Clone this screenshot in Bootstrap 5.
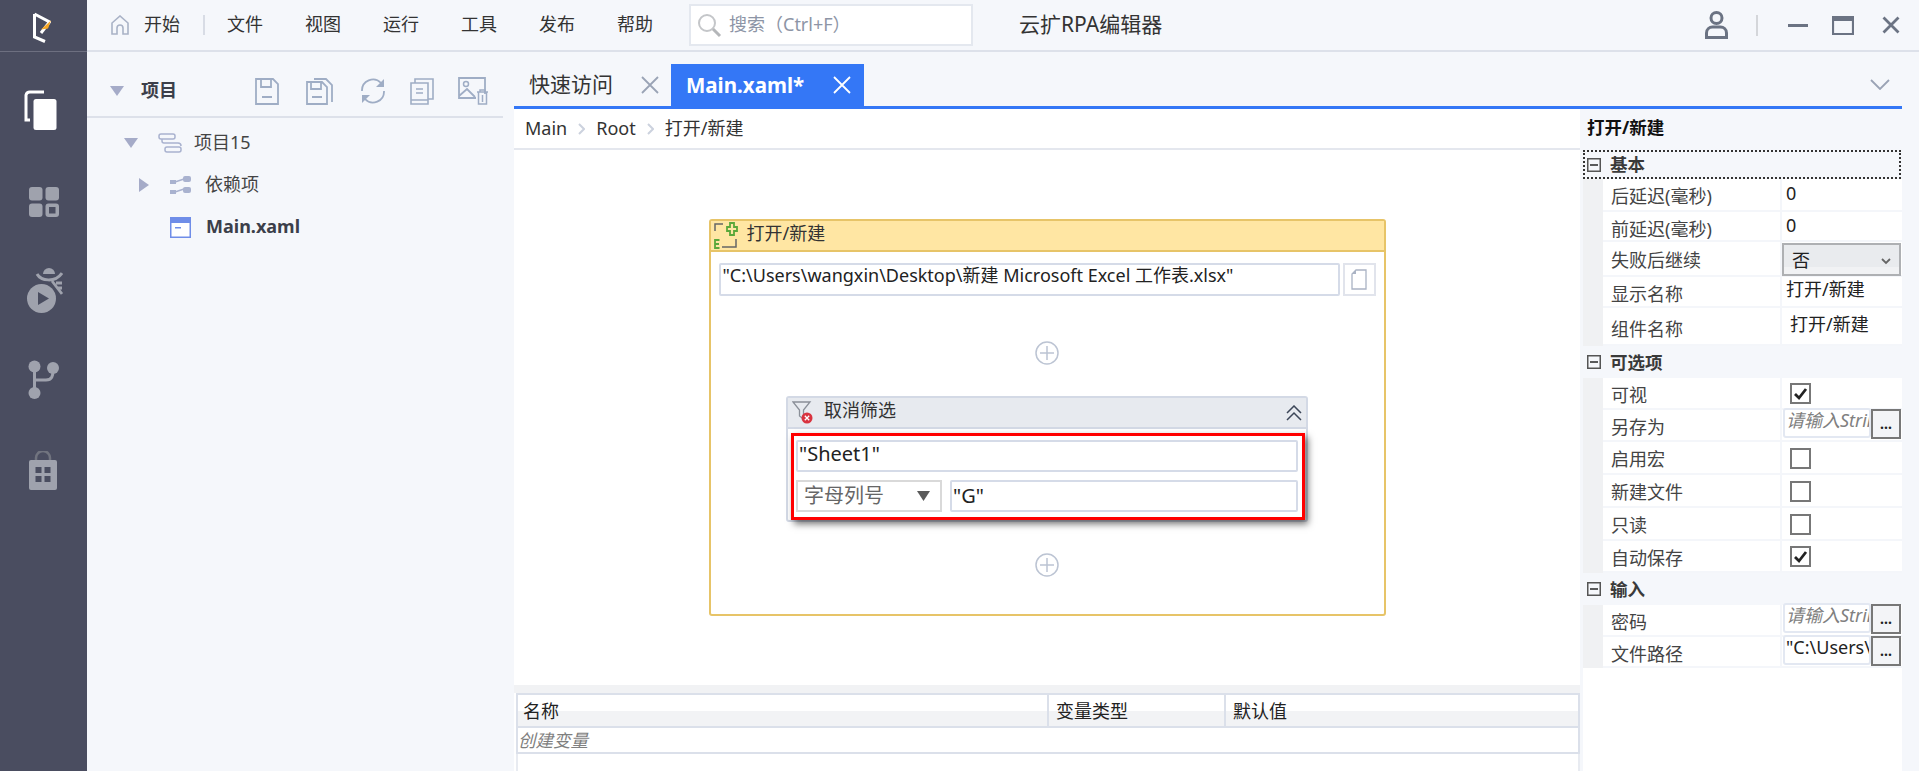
<!DOCTYPE html>
<html lang="zh"><head><meta charset="utf-8"><title>云扩RPA编辑器</title>
<link href="https://cdn.jsdelivr.net/npm/bootstrap@5.3.0/dist/css/bootstrap.min.css" rel="stylesheet">
<style>
html,body{height:771px;overflow:hidden}
body{background:#f5f7fb;font-family:"Noto Sans","Noto Sans CJK SC",sans-serif;font-size:18px;line-height:1.2;color:#333}
svg{display:block;flex:none}
.rail{width:87px;flex:none;background:#4a4d60;height:771px}
.rail-logo{height:52px;width:100%;border-bottom:1px solid #6d6f80;padding:12px 0 0 33px}
.ri1{margin:38px 0 0 -6px}.ri2{margin-top:57px}.ri3{margin:50px 0 0 3px}.ri4{margin:47px 0 0 0}.ri5{margin:52px 0 0 -1px}
.right-col{min-width:0}
.topbar{height:52px;flex:none;border-bottom:2px solid #dde1ea;padding-left:24px}
.home{margin-right:15px}
.menu-sep{width:2px;height:20px;background:#d8dce5;margin:0 22px 0 23px}
.menu-item{width:36px;margin-right:42px;white-space:nowrap;color:#333}
.searchbox{width:284px;height:42px;margin-left:-6px;background:#fff;border:2px solid #e4e8ef;color:#8d95a6;padding-left:6px;gap:7px}
.app-title{margin-left:46px;font-size:21px;color:#333;white-space:nowrap}
.win-tools{margin-left:auto;padding-right:19px}
.wsep{width:2px;height:21px;background:#d4d6da;margin:0 30px 0 28px}
.proj{width:416px;flex:none}
.proj-head{height:66px;border-bottom:2px solid #dde1ea;padding:14px 0 0 23px}
.proj-title{font-weight:700;margin:0 0 0 17px;font-size:18px;color:#3c3f4a;width:114px}
.pi1{margin-right:27px}
.tree-row{height:42px;color:#444}
.t1{padding-left:37px;margin-top:4px}.t2{padding-left:52px}.t3{padding-left:83px}
.tree-i1{margin-left:20px}.tree-l1{margin-left:12px}
.tree-i2{margin-left:21px}.tree-l2{margin-left:14px}
.tree-label-b{font-weight:700;color:#3c3f4a;margin-left:15px}
.work{min-width:0;margin:0 17px 0 11px}
.tabs{height:54px;flex:none;padding:12px 0 0 0;position:relative}
.tab-a,.tab-b{height:42px;font-size:21px}
.tab-a{padding-left:15px;width:157px;color:#333}
.tab-b{width:193px;background:#3477f6;color:#fff;font-weight:700;padding-left:15px;font-size:20.5px}
.tab-x{margin-left:auto;margin-right:12px}
.tab-b .tab-x{margin-right:13px}
.tab-more{position:absolute;right:12px;top:27px}
.panel{border-top:3px solid #3477f6;min-height:0}
.doc{width:1066px;flex:none}
.crumb{height:41px;flex:none;background:#fff;border-bottom:2px solid #e4e7ee;padding:0 0 0 11px;color:#333}
.crumb-sep{margin:0 11px}
.canvas{background:#fff;height:535px;flex:none}
.flow-card{width:677px;height:397px;margin-top:69px;border:2px solid #e7c468;border-radius:3px;background:#fff}
.flow-head{height:31px;background:#ffe6a3;border-bottom:2px solid #e7c468;padding-left:3px;gap:9px}
.flow-head span,.sub-head span{padding-bottom:3px}
.flow-body{padding:11px 8px 0 8px}
.path-row{height:33px;gap:3px}
.path-in{height:33px;border:2px solid #d5dbe8;border-radius:2px;padding-left:2px;color:#222;white-space:nowrap;overflow:hidden}
.path-btn{width:33px;height:33px;border:2px solid #e1e4ec}
.plus-a{margin:45px auto 0}
.plus-b{margin:31px auto 0}
.sub-card{width:522px;height:126px;margin:31px auto 0;border:2px solid #d3d9e5;border-radius:3px;background:#fff}
.sub-head{height:31px;background:#e7eaef;border-bottom:2px solid #d3d9e5;padding:0 4px 0 4px;gap:10px}
.redbox{margin:4px 1px 0 3px;height:87px;border:3px solid #f00;padding:4px 4px 0 2px;box-shadow:3px 4px 7px rgba(0,0,0,.55);background:#fff}
.fld{height:32px;border:2px solid #d5dbe8;border-radius:2px;padding-left:1px;color:#222;font-size:20px}
.fld-top{padding-bottom:5px}
.row2{gap:8px;margin-top:8px}
.fld-sel{width:146px;height:32px;flex:none;border:2px solid #d9d9d9;padding:0 10px 0 6px;font-size:20px;color:#666}
.strip{height:8px;background:#f1f2f4;flex:none}
.vars{background:#fff;flex-grow:1;padding-left:2px}
.var-head{height:35px;border:2px solid #dbe0ea;background:linear-gradient(#fff 50%,#f2f3f5 50%);color:#222}
.vh1{width:531px;padding:6px 0 0 5px;border-right:2px solid #dbe0ea;flex:none}
.vh2{width:177px;padding:6px 0 0 7px;border-right:2px solid #dbe0ea;flex:none}
.vh3{padding:6px 0 0 7px}
.var-new{height:26px;border:solid #dbe0ea;border-width:0 2px 2px 2px;color:#7f7f7f;font-style:italic;font-size:17.5px;padding:2px 0 0 0}
.var-rest{flex-grow:1;border:solid #e8ebf1;border-width:0 2px}
.props{width:322px;flex:none}
.props-title{height:41px;font-weight:700;color:#111;padding:0 0 4px 7px;font-size:17.5px}
.pgroup{margin-left:3px;height:32px;font-weight:700;color:#3a3a3a;font-size:17.5px;gap:9px;padding-left:4px}
.pgroup-focus{height:29px;border:2px dotted #333;padding-left:2px;margin-left:3px;margin-right:1px;margin-bottom:0}
.prow{margin-left:3px;background:#fff;border-bottom:2px solid #f4f6fa;color:#444}
.pgut{width:20px;flex:none;background:#f0f1f3;align-self:stretch;margin-bottom:-2px}
.plabel{width:179px;flex:none;padding-left:8px;border-right:2px solid #f4f6fa;align-self:stretch;padding-top:7px}
.plabel-low{padding-top:8px}
.plabel-tall{padding-top:11px}
.pval{flex-grow:1;color:#222;min-width:0;padding-left:4px;padding-bottom:3px}
.pval-n{padding-bottom:1px}
.h30{height:30px}.h31{height:31px}.h32{height:32px}.h33{height:33px}.h35{height:35px}.h38{height:38px}
.psel{height:33px;width:119px;margin-left:-4px;margin-top:1px;background:linear-gradient(#e9ebee 75%,#f1f2f4 75%);border:2px solid #aeb0b3;padding:3px 8px 0 8px;color:#222}
.cbx{width:21px;height:21px;border:2px solid #777;background:#fff;margin:4px 0 0 4px}
.pinput{width:88px;height:30px;margin:0 0 0 -3px;border:2px solid #e3e8f2;border-radius:3px;color:#808080;font-style:italic;overflow:hidden;white-space:nowrap;font-size:18px;padding-left:1px}
.pinput-v{color:#222;font-style:normal}
.pbtn{width:30px;height:30px;margin-top:1px;border:2px solid #777;background:#f3f4f7;color:#222;font-size:14px;font-weight:700;padding-top:6px;text-align:center;line-height:1}
.props-rest{margin-left:3px;background:#fff;flex-grow:1}
</style></head>
<body class="d-flex">
<aside class="rail d-flex flex-column align-items-center">
 <div class="rail-logo"><svg width="18" height="31" viewBox="0 0 18 31"><path d="M1.5 2 L1.5 25 L12 29.5 M1.5 2 L16.5 10 L8 21" fill="none" stroke="#fff" stroke-width="3"/><path d="M8 17.5L18 8.5L15 16.5z" fill="#f9a825"/></svg></div>
 <svg class="ri1" width="33" height="40" viewBox="0 0 33 40"><path d="M20 2H6a4 4 0 0 0-4 3v25h4" fill="none" stroke="#fff" stroke-width="3"/><rect x="9.500" y="9" width="23" height="31" rx="2.500" fill="#fff"/></svg>
 <svg class="ri2" width="30" height="30" viewBox="0 0 30 30"><rect width="13.500" height="13.500" rx="3" fill="#9fa2ad"/><rect x="16.500" width="13.500" height="13.500" rx="3" fill="#9fa2ad"/><rect y="16.500" width="13.500" height="13.500" rx="3" fill="#9fa2ad"/><rect x="16.500" y="16.500" width="13.500" height="13.500" rx="3" fill="#9fa2ad"/><rect x="20" y="20" width="6.500" height="6.500" fill="#4a4d60"/></svg>
 <svg class="ri3" width="36" height="46" viewBox="0 0 36 46"><path d="M16 7a6 6 0 0 1 12 0z" fill="#9fa2ad"/><path d="M10 7C14 14 28 16 35 6" fill="none" stroke="#9fa2ad" stroke-width="3"/><path d="M25 14L35 27M29 16h6M30 21h5" fill="none" stroke="#9fa2ad" stroke-width="2.800"/><circle cx="14.500" cy="31.500" r="14.500" fill="#9fa2ad"/><path d="M11 25L22 31.500L11 38z" fill="#4a4d60"/></svg>
 <svg class="ri4" width="31" height="39" viewBox="0 0 31 39"><circle cx="6.500" cy="6.500" r="6" fill="#9fa2ad"/><circle cx="25" cy="8" r="6" fill="#9fa2ad"/><circle cx="6.500" cy="33" r="6" fill="#9fa2ad"/><path d="M6.500 8V32M7 20H18c6 0 7-4 7-10" fill="none" stroke="#9fa2ad" stroke-width="3"/></svg>
 <svg class="ri5" width="28" height="39" viewBox="0 0 28 39"><path d="M7 10V7a7 7 0 0 1 14 0v3" fill="none" stroke="#71747f" stroke-width="2.500"/><rect y="9" width="28" height="30" rx="2" fill="#9fa2ad"/><g fill="#4a4d60"><rect x="6.500" y="16" width="6" height="6"/><rect x="15.500" y="16" width="6" height="6"/><rect x="6.500" y="25" width="6" height="6"/><rect x="15.500" y="25" width="6" height="6"/></g></svg>
</aside>
<div class="right-col flex-grow-1 d-flex flex-column">
 <header class="topbar d-flex align-items-center">
  <svg class="home" width="18" height="20" viewBox="0 0 18 20"><path d="M1 19V8L9 1l8 7v11h-5v-6a3 3 0 0 0-6 0v6z" fill="none" stroke="#a9b2c6" stroke-width="1.600"/></svg>
  <span class="text-nowrap">开始</span><span class="menu-sep"></span>
  <span class="menu-item">文件</span><span class="menu-item">视图</span><span class="menu-item">运行</span><span class="menu-item">工具</span><span class="menu-item">发布</span><span class="menu-item">帮助</span>
  <div class="searchbox d-flex align-items-center"><svg width="25" height="25" viewBox="0 0 25 25"><circle cx="10" cy="10" r="8" fill="none" stroke="#c4c6c9" stroke-width="2"/><path d="M16 16l7 7" stroke="#b4b6b9" stroke-width="3"/></svg><span>搜索（Ctrl+F）</span></div>
  <div class="app-title">云扩RPA编辑器</div>
  <div class="win-tools d-flex align-items-center">
   <svg width="23" height="28" viewBox="0 0 23 28"><circle cx="11.500" cy="7" r="5.500" fill="none" stroke="#6b7383" stroke-width="3"/><path d="M1.500 26.500V22c0-4 3-6 6-6h8c3 0 6 2 6 6v4.500z" fill="none" stroke="#6b7383" stroke-width="3"/></svg>
   <span class="wsep"></span>
   <svg width="20" height="3" viewBox="0 0 20 3"><rect width="20" height="3" fill="#6b7383"/></svg>
   <svg class="ms-4 me-4" width="22" height="19" viewBox="0 0 22 19"><path d="M1 1h20v17H1z" fill="none" stroke="#6b7383" stroke-width="2.200"/><rect width="22" height="5" fill="#6b7383"/></svg>
   <svg class="ms-1" width="18" height="18" viewBox="0 0 18 18"><path d="M1.500 1.500l15 15M16.500 1.500l-15 15" stroke="#6b7383" stroke-width="2.800"/></svg>
  </div>
 </header>
 <div class="d-flex flex-grow-1 min-height-0">
  <section class="proj">
   <div class="proj-head d-flex align-items-center">
    <svg width="14" height="10" viewBox="0 0 14 10"><path d="M0 0h14L7 10z" fill="#a5abc8"/></svg>
    <h2 class="proj-title">项目</h2>
    <svg class="pi1" width="24" height="27" viewBox="0 0 24 27"><path d="M1 1h17l5 5v20H1zM6 1v8h10V1M7 19h10" fill="none" stroke="#9fadc5" stroke-width="1.800"/></svg>
    <svg class="pi1" width="27" height="27" viewBox="0 0 27 27"><path d="M1 4h15l5 5v17H1zM5 4v7h10V4M6 19h10M8 1h12l6 6v17" fill="none" stroke="#9fadc5" stroke-width="1.800"/></svg>
    <svg class="pi1 me-4" width="26" height="26" viewBox="0 0 26 26"><path d="M2 13a11 11 0 0 1 19-8M24 13a11 11 0 0 1-19 8" fill="none" stroke="#9fadc5" stroke-width="1.800"/><path d="M24 1v8h-8zM2 25v-8h8z" fill="#9fadc5"/></svg>
    <svg class="pi1 me-4" width="24" height="27" viewBox="0 0 24 27"><path d="M5 5h13v17H1V5zM5 5V1h18v20h-5M1 22v4h17v-4M6 11h7M6 15h7" fill="none" stroke="#9fadc5" stroke-width="1.600"/></svg>
    <svg width="31" height="28" viewBox="0 0 31 28"><path d="M18 21H1V1h26v16M1 19l8-7 8 8" fill="none" stroke="#9fadc5" stroke-width="1.800"/><circle cx="8" cy="7" r="2.500" fill="none" stroke="#9fadc5" stroke-width="1.500"/><path d="M19 15h11M22 15v-2h5v2M20.500 15v12h8V15M24.500 18v7" fill="none" stroke="#9fadc5" stroke-width="1.500"/></svg>
   </div>
   <div class="tree-row d-flex align-items-center t1">
    <svg width="14" height="10" viewBox="0 0 14 10"><path d="M0 0h14L7 10z" fill="#a5abc8"/></svg>
    <svg class="tree-i1" width="24" height="20" viewBox="0 0 24 20"><g fill="none" stroke="#a9b2cf" stroke-width="1.500"><rect x="1" y="1" width="16" height="5" rx="2"/><rect x="7" y="14" width="16" height="5" rx="2"/><path d="M4 6v2a2 2 0 0 0 2 2h14a3 3 0 0 1 3 3"/></g></svg>
    <span class="tree-l1">项目15</span>
   </div>
   <div class="tree-row d-flex align-items-center t2">
    <svg width="10" height="14" viewBox="0 0 10 14"><path d="M0 0l10 7L0 14z" fill="#a5abc8"/></svg>
    <svg class="tree-i2" width="21" height="19" viewBox="0 0 21 19"><g fill="#a9b2cf"><rect y="4" width="6" height="4"/><rect x="13" width="8" height="6" rx="2"/><rect y="14" width="6" height="4"/><rect x="13" y="11" width="8" height="6" rx="2"/></g><path d="M5 6l9-3M5 16l9-3" stroke="#a9b2cf" stroke-width="1.500"/></svg>
    <span class="tree-l2">依赖项</span>
   </div>
   <div class="tree-row d-flex align-items-center t3">
    <svg width="21" height="21" viewBox="0 0 21 21"><rect x=".75" y=".75" width="19.500" height="19.500" fill="#fff" stroke="#6f8de8" stroke-width="1.500"/><rect width="21" height="6" fill="#6f8de8"/><rect x="5" y="10" width="6" height="1.500" fill="#6f8de8"/></svg>
    <span class="tree-label-b">Main.xaml</span>
   </div>
  </section>
  <section class="work flex-grow-1 d-flex flex-column">
   <div class="tabs d-flex">
    <div class="tab-a d-flex align-items-center"><span>快速访问</span><svg class="tab-x" width="18" height="18" viewBox="0 0 18 18"><path d="M1 1l16 16M17 1L1 17" stroke="#9aa3b5" stroke-width="1.800"/></svg></div>
    <div class="tab-b d-flex align-items-center"><span>Main.xaml*</span><svg class="tab-x" width="18" height="18" viewBox="0 0 18 18"><path d="M1 1l16 16M17 1L1 17" stroke="#fff" stroke-width="1.800"/></svg></div>
    <svg class="tab-more" width="20" height="11" viewBox="0 0 20 11"><path d="M1 1l9 9 9-9" fill="none" stroke="#9aa3b5" stroke-width="1.800"/></svg>
   </div>
   <div class="panel d-flex flex-grow-1">
    <div class="doc d-flex flex-column">
     <nav class="crumb d-flex align-items-center"><span>Main</span><svg class="crumb-sep" width="7" height="12" viewBox="0 0 7 12"><path d="M1 1l5 5-5 5" fill="none" stroke="#ccd2de" stroke-width="2"/></svg><span>Root</span><svg class="crumb-sep" width="7" height="12" viewBox="0 0 7 12"><path d="M1 1l5 5-5 5" fill="none" stroke="#ccd2de" stroke-width="2"/></svg><span>打开/新建</span></nav>
     <div class="canvas overflow-hidden">
      <div class="flow-card mx-auto">
       <div class="flow-head d-flex align-items-center">
        <svg width="24" height="27" viewBox="0 0 24 27"><path d="M1 9V2h8M22 17v8H8" fill="none" stroke="#666" stroke-width="1.500"/><path d="M13 5h3V1h4v4h3v4h-3v4h-4V9h-3z" fill="none" stroke="#5aa83a" stroke-width="1.800"/><path d="M5.500 18H1v8h4.500M1 22h4" fill="none" stroke="#5aa83a" stroke-width="1.800"/></svg>
        <span>打开/新建</span>
       </div>
       <div class="flow-body d-flex flex-column">
        <div class="path-row d-flex"><div class="path-in flex-grow-1">"C:\Users\wangxin\Desktop\新建 Microsoft Excel 工作表.xlsx"</div><div class="path-btn d-flex align-items-center justify-content-center"><svg width="16" height="21" viewBox="0 0 16 21"><path d="M5 1h10v19H1V5z" fill="#fff" stroke="#aab3c4" stroke-width="1.300"/><path d="M5 1v4H1z" fill="#aab3c4"/></svg></div></div>
        <svg class="plus-a" width="24" height="24" viewBox="0 0 24 24"><circle cx="12" cy="12" r="11" fill="#fff" stroke="#bcc4d3" stroke-width="1.500"/><path d="M12 5v14M5 12h14" stroke="#bcc4d3" stroke-width="1.500"/></svg>
        <div class="sub-card">
         <div class="sub-head d-flex align-items-center">
          <svg width="22" height="25" viewBox="0 0 22 25"><path d="M1 2h17l-6.500 8v9l-4-3v-6z" fill="none" stroke="#8a8f98" stroke-width="1.300"/><circle cx="15" cy="18" r="5.500" fill="#d9333f"/><path d="M12.800 15.800l4.400 4.400M17.200 15.800l-4.400 4.400" stroke="#fff" stroke-width="1.300"/></svg>
          <span>取消筛选</span>
          <svg class="ms-auto" width="16" height="16" viewBox="0 0 16 16"><path d="M1 8l7-7 7 7M1 15l7-7 7 7" fill="none" stroke="#3c4658" stroke-width="1.500"/></svg>
         </div>
         <div class="redbox">
          <div class="fld fld-top d-flex align-items-center">"Sheet1"</div>
          <div class="row2 d-flex"><div class="fld-sel d-flex align-items-center justify-content-between"><span>字母列号</span><svg width="13" height="10" viewBox="0 0 13 10"><path d="M0 0h13L6.500 10z" fill="#5a5a5a"/></svg></div><div class="fld flex-grow-1 d-flex align-items-center">"G"</div></div>
         </div>
        </div>
        <svg class="plus-b" width="24" height="24" viewBox="0 0 24 24"><circle cx="12" cy="12" r="11" fill="#fff" stroke="#bcc4d3" stroke-width="1.500"/><path d="M12 5v14M5 12h14" stroke="#bcc4d3" stroke-width="1.500"/></svg>
       </div>
      </div>
     </div>
     <div class="strip"></div>
     <div class="vars d-flex flex-column">
      <div class="var-head d-flex"><div class="vh1">名称</div><div class="vh2">变量类型</div><div class="vh3">默认值</div></div>
      <div class="var-new">创建变量</div>
      <div class="var-rest"></div>
     </div>
    </div>
    <aside class="props d-flex flex-column">
     <div class="props-title d-flex align-items-center">打开/新建</div>
     <div class="pgroup pgroup-focus d-flex align-items-center"><svg width="14" height="14" viewBox="0 0 14 14"><rect x=".75" y=".75" width="12.500" height="12.500" fill="none" stroke="#555" stroke-width="1.500"/><rect x="3" y="6.200" width="8" height="1.600" fill="#333"/></svg>基本</div>
     <div class="prow d-flex align-items-center h33"><span class="pgut"></span><span class="plabel">后延迟(毫秒)</span><span class="pval pval-n">0</span></div>
     <div class="prow d-flex align-items-center h30"><span class="pgut"></span><span class="plabel">前延迟(毫秒)</span><span class="pval pval-n">0</span></div>
     <div class="prow d-flex align-items-start h35"><span class="pgut"></span><span class="plabel plabel-low">失败后继续</span><span class="pval"><span class="psel d-flex align-items-center justify-content-between"><span>否</span><svg width="10" height="7" viewBox="0 0 10 7"><path d="M1 1l4 4 4-4" fill="none" stroke="#666" stroke-width="1.800"/></svg></span></span></div>
     <div class="prow d-flex align-items-center h31"><span class="pgut"></span><span class="plabel">显示名称</span><span class="pval">打开/新建</span></div>
     <div class="prow d-flex align-items-center h38"><span class="pgut"></span><span class="plabel plabel-tall">组件名称</span><span class="pval ps-2">打开/新建</span></div>
     <div class="pgroup d-flex align-items-center"><svg width="14" height="14" viewBox="0 0 14 14"><rect x=".75" y=".75" width="12.500" height="12.500" fill="none" stroke="#555" stroke-width="1.500"/><rect x="3" y="6.200" width="8" height="1.600" fill="#333"/></svg>可选项</div>
     <div class="prow d-flex align-items-center h32"><span class="pgut"></span><span class="plabel">可视</span><span class="pval"><span class="cbx d-block"><svg width="17" height="17" viewBox="0 0 17 17"><path d="M3 9l4 4 7-9" fill="none" stroke="#222" stroke-width="2.800"/></svg></span></span></div>
     <div class="prow d-flex align-items-center h32"><span class="pgut"></span><span class="plabel">另存为</span><span class="pval d-flex"><span class="pinput">请输入String</span><span class="pbtn">...</span></span></div>
     <div class="prow d-flex align-items-center h33"><span class="pgut"></span><span class="plabel">启用宏</span><span class="pval"><span class="cbx d-block"></span></span></div>
     <div class="prow d-flex align-items-center h33"><span class="pgut"></span><span class="plabel">新建文件</span><span class="pval"><span class="cbx d-block"></span></span></div>
     <div class="prow d-flex align-items-center h33"><span class="pgut"></span><span class="plabel">只读</span><span class="pval"><span class="cbx d-block"></span></span></div>
     <div class="prow d-flex align-items-center h32"><span class="pgut"></span><span class="plabel">自动保存</span><span class="pval"><span class="cbx d-block"><svg width="17" height="17" viewBox="0 0 17 17"><path d="M3 9l4 4 7-9" fill="none" stroke="#222" stroke-width="2.800"/></svg></span></span></div>
     <div class="pgroup d-flex align-items-center"><svg width="14" height="14" viewBox="0 0 14 14"><rect x=".75" y=".75" width="12.500" height="12.500" fill="none" stroke="#555" stroke-width="1.500"/><rect x="3" y="6.200" width="8" height="1.600" fill="#333"/></svg>输入</div>
     <div class="prow d-flex align-items-center h32"><span class="pgut"></span><span class="plabel">密码</span><span class="pval d-flex"><span class="pinput">请输入String</span><span class="pbtn">...</span></span></div>
     <div class="prow d-flex align-items-center h31"><span class="pgut"></span><span class="plabel">文件路径</span><span class="pval d-flex"><span class="pinput pinput-v">"C:\Users\wangxin</span><span class="pbtn">...</span></span></div>
     <div class="props-rest"></div>
    </aside>
   </div>
  </section>
 </div>
</div>
</body></html>
